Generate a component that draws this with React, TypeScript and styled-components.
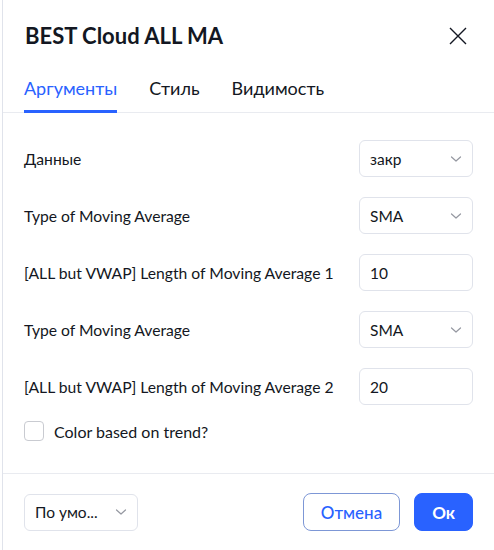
import React from "react";
import styled, { createGlobalStyle } from "styled-components";

const colors = {
  text: "#131722",
  blue: "#2962ff",
  border: "#e0e3eb",
  divider: "#e9ebf0",
  chevron: "#9598a1",
};

const GlobalStyle = createGlobalStyle`
  html, body {
    margin: 0;
    padding: 0;
    background: #ffffff;
  }
  body {
    font-family: "Lato", "Open Sans", sans-serif;
    color: ${colors.text};
  }
`;

interface IRow {
  label: string;
  kind: "select" | "input";
  value: string;
}

const rows: IRow[] = [
  { label: "Данные", kind: "select", value: "закр" },
  { label: "Type of Moving Average", kind: "select", value: "SMA" },
  { label: "[ALL but VWAP] Length of Moving Average 1", kind: "input", value: "10" },
  { label: "Type of Moving Average", kind: "select", value: "SMA" },
  { label: "[ALL but VWAP] Length of Moving Average 2", kind: "input", value: "20" },
];

function Chevron() {
  return (
    <svg width="12" height="8" viewBox="0 0 12 8" fill="none">
      <path d="M1.5 2l4.5 4 4.5-4" stroke={colors.chevron} strokeWidth="1.2" strokeLinecap="round" strokeLinejoin="round" />
    </svg>
  );
}

export default function App() {
  return (
    <>
      <GlobalStyle />
      <Dialog>
        <Header>
          <div className="dialog-title">BEST Cloud ALL MA</div>
          <CloseButton aria-label="close">
            <svg width="18" height="18" viewBox="0 0 18 18" fill="none">
              <path d="M1 1l16 16M17 1L1 17" stroke={colors.text} strokeWidth="1.4" />
            </svg>
          </CloseButton>
        </Header>
        <Tabs>
          <Tab active>Аргументы</Tab>
          <Tab>Стиль</Tab>
          <Tab>Видимость</Tab>
        </Tabs>
        <Body>
          {rows.map((row, index) => (
            <Row key={index}>
              <div className="row-label">{row.label}</div>
              <Field>
                <span>{row.value}</span>
                {row.kind === "select" ? <Chevron /> : null}
              </Field>
            </Row>
          ))}
          <CheckRow>
            <Checkbox />
            <span>Color based on trend?</span>
          </CheckRow>
        </Body>
        <Footer>
          <Field width="114px">
            <span>По умо...</span>
            <Chevron />
          </Field>
          <div className="footer-buttons">
            <Button>Отмена</Button>
            <Button primary>Ок</Button>
          </div>
        </Footer>
      </Dialog>
    </>
  );
}

const Dialog = styled.div`
  margin-left: 2px;
  width: 492px;
  height: 550px;
  box-sizing: border-box;
  border-left: 1px solid ${colors.border};
  background: #ffffff;
  display: flex;
  flex-direction: column;
`;

const Header = styled.div`
  display: flex;
  align-items: center;
  justify-content: space-between;
  padding: 22px 27px 0 22px;

  .dialog-title {
    font-size: 22px;
    line-height: 28px;
    font-weight: 700;
  }
`;

const CloseButton = styled.div`
  display: flex;
`;

const Tabs = styled.div`
  display: flex;
  gap: 32px;
  padding: 0 21px;
  margin-top: 28px;
  border-bottom: 1px solid ${colors.divider};
`;

const Tab = styled.div<{ active?: boolean }>`
  font-size: 18px;
  line-height: 20px;
  padding-bottom: 12px;
  color: ${(props) => (props.active ? colors.blue : colors.text)};
  border-bottom: 3px solid ${(props) => (props.active ? colors.blue : "transparent")};
  margin-bottom: -1px;
`;

const Body = styled.div`
  flex: 1;
  display: flex;
  flex-direction: column;
  gap: 20px;
  padding: 27px 21px 0 21px;
  border-bottom: 1px solid ${colors.divider};
`;

const Row = styled.div`
  display: flex;
  align-items: center;
  justify-content: space-between;
  height: 37px;

  .row-label {
    font-size: 15.7px;
  }
`;

const Field = styled.div<{ width?: string }>`
  width: ${(props) => props.width || "114px"};
  height: 37px;
  box-sizing: border-box;
  border: 1px solid ${colors.border};
  border-radius: 6px;
  display: flex;
  align-items: center;
  justify-content: space-between;
  padding: 0 10px 0 10px;
  font-size: 15.5px;
`;

const CheckRow = styled.div`
  display: flex;
  align-items: center;
  gap: 10px;
  height: 20px;
  font-size: 16px;
  margin-top: -4px;
`;

const Checkbox = styled.div`
  width: 20px;
  height: 20px;
  box-sizing: border-box;
  border: 1px solid #c9cbd1;
  border-radius: 4px;
`;

const Footer = styled.div`
  height: 76px;
  display: flex;
  align-items: center;
  justify-content: space-between;
  padding: 0 21px 0 21px;
  box-sizing: border-box;

  .footer-buttons {
    display: flex;
    gap: 14px;
  }
`;

const Button = styled.button<{ primary?: boolean }>`
  height: 38px;
  padding: 0 17px;
  border-radius: 8px;
  font-family: inherit;
  font-size: 17px;
  font-weight: ${(props) => (props.primary ? 700 : 500)};
  color: ${(props) => (props.primary ? "#ffffff" : colors.blue)};
  background: ${(props) => (props.primary ? colors.blue : "#ffffff")};
  border: 1px solid ${(props) => (props.primary ? colors.blue : "#7d97d6")};
`;
